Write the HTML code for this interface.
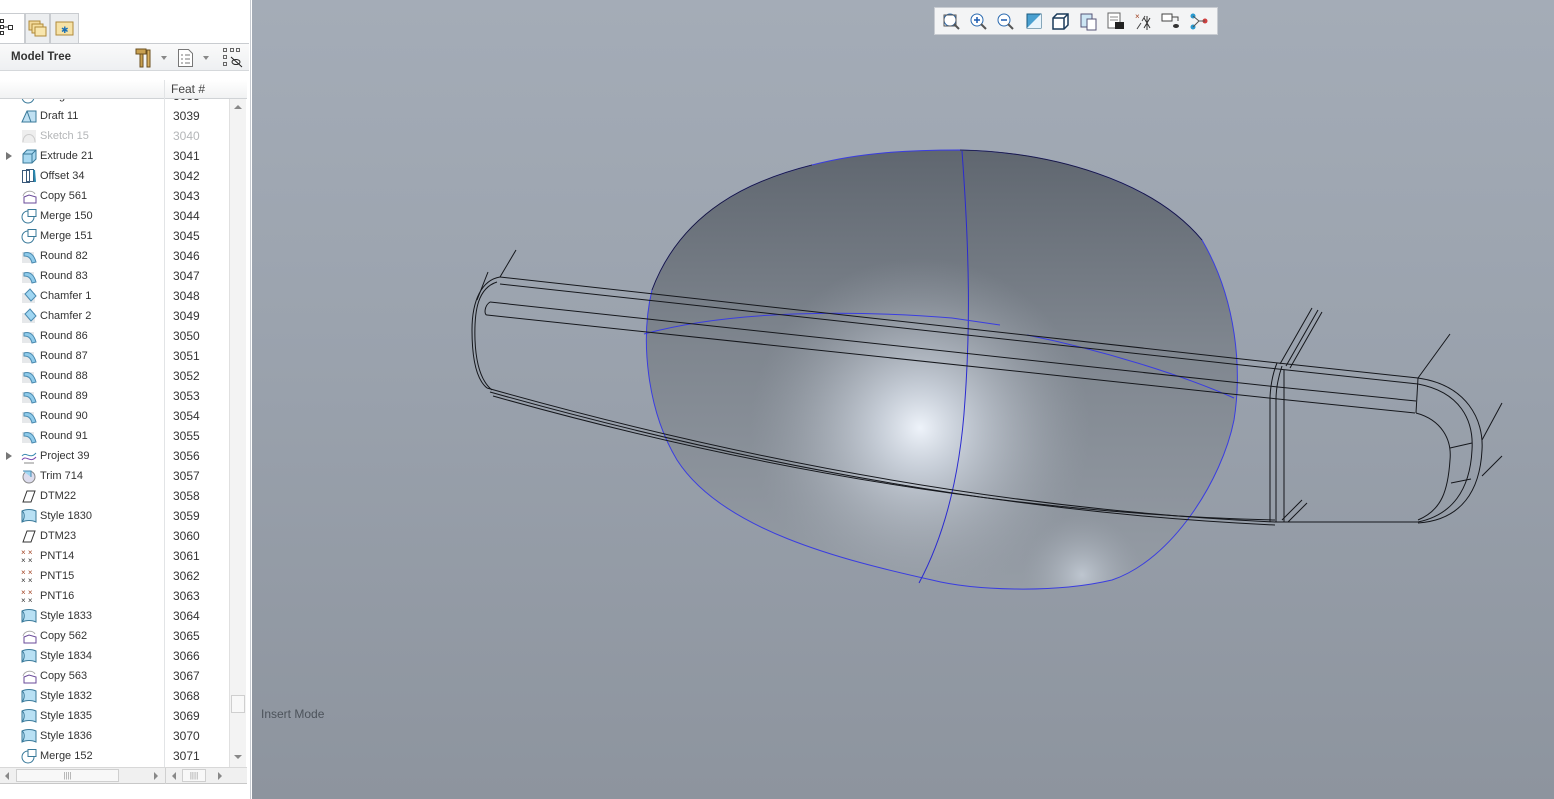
<!DOCTYPE html>
<html><head><meta charset="utf-8">
<style>
*{margin:0;padding:0;box-sizing:border-box}
body{width:1554px;height:799px;overflow:hidden;font-family:"Liberation Sans",Arial,sans-serif;background:#fff;position:relative}
#left{position:absolute;left:0;top:0;width:251px;height:799px;background:#fff;border-right:1px solid #c8ccd2}
.tabs{position:absolute;top:13px;left:0;height:30px;width:81px}
.tab{position:absolute;top:0;height:30px;border:1px solid #c9ccd0;border-bottom:none;background:#eceef0}
#mtbar{position:absolute;top:43px;left:0;width:249px;height:28px;border-top:1px solid #c9ccd0;border-bottom:1px solid #d5d8db;background:linear-gradient(#fafafa,#eef0f2)}
#mtbar .t{position:absolute;left:11px;top:7px;font-size:11.5px;font-weight:bold;color:#333}
#hdr{position:absolute;top:80px;left:0;width:247px;height:19px;border-bottom:1px solid #d0d3d6;background:linear-gradient(#fff,#f1f2f3)}
#hdr span{position:absolute;left:171px;top:2px;font-size:12px;color:#444}
#rows{position:absolute;left:0;top:99px;width:229px;height:668px;overflow:hidden}
.row{position:absolute;left:0;width:228px;height:20px;font-size:11px;color:#333}
.row .n{position:absolute;left:40px;top:4px}
.row .f{position:absolute;left:173px;top:3px;font-size:12px}
.row svg{position:absolute;left:21px;top:2px}
.row.g{color:#b4b6b8}
.arr{position:absolute;left:6px;top:6px;width:0;height:0;border-left:6px solid #777;border-top:4px solid transparent;border-bottom:4px solid transparent}
#vsb{position:absolute;left:229px;top:99px;width:17px;height:668px;background:#f3f3f3;border-left:1px solid #e0e0e0}
#coldiv{position:absolute;left:164px;top:80px;width:1px;height:687px;background:#e2e4e6;z-index:2}
#hsb{position:absolute;top:767px;left:0;width:247px;height:17px;background:#f0f0f0;border-top:1px solid #d8d8d8;border-bottom:1px solid #c8c8c8}
#view{position:absolute;left:252px;top:0;width:1302px;height:799px;background:linear-gradient(#a4acb7 0%,#9aa2ad 45%,#8d949e 100%)}
#tb{position:absolute;left:934px;top:7px;width:284px;height:28px;background:#f3f4f5;border:1px solid #c8ccd2}
#tb div{position:absolute;top:2px;width:24px;height:22px}
#im{position:absolute;left:9px;top:707px;font-size:12px;color:#4d535b}
</style></head><body>
<div id="left">
  <div class="tabs">
    <div class="tab" style="left:-2px;width:27px;background:#fff;border-bottom:1px solid #fff;height:31px"></div>
    <div class="tab" style="left:25px;width:25px"></div>
    <div class="tab" style="left:50px;width:29px"></div>
    <svg style="position:absolute;left:0;top:6px" width="14" height="18"><rect x="0.5" y="0.5" width="3" height="3" fill="#fff" stroke="#333"/><rect x="0.5" y="6.5" width="3" height="3" fill="#fff" stroke="#333"/><rect x="0.5" y="12.5" width="3" height="3" fill="#fff" stroke="#333"/><rect x="8.5" y="6.5" width="4" height="4" fill="#fff" stroke="#333"/><path d="M3 8h5" stroke="#333"/></svg>
    <svg style="position:absolute;left:27px;top:5px" width="20" height="20"><rect x="2" y="3" width="11" height="9" fill="#f2d99a" stroke="#b08a3a"/><rect x="5" y="6" width="11" height="9" fill="#f5df9f" stroke="#b08a3a"/><rect x="8" y="9" width="11" height="9" fill="#f8e6ae" stroke="#b08a3a"/></svg>
    <svg style="position:absolute;left:55px;top:6px" width="20" height="18"><rect x="1" y="3" width="17" height="13" fill="#f6e2a6" stroke="#b08a3a"/><text x="6" y="14" font-size="9" fill="#1a6fb5">✱</text></svg>
  </div>
  <div id="mtbar"><span class="t">Model Tree</span>
    <svg style="position:absolute;left:134px;top:3px" width="20" height="22"><rect x="2" y="2" width="10" height="5" fill="#c8a050" stroke="#6b5020"/><rect x="6" y="7" width="3" height="13" fill="#c8a050" stroke="#6b5020"/><rect x="13" y="3" width="3" height="17" fill="#d8b060" stroke="#6b5020"/></svg>
    <div style="position:absolute;left:161px;top:12px;border-top:4px solid #888;border-left:3px solid transparent;border-right:3px solid transparent"></div>
    <svg style="position:absolute;left:177px;top:4px" width="18" height="20"><path d="M1.5 1.5h10l4 4v13h-14z" fill="#fff" stroke="#777"/><path d="M4 7h2M8 7h5M4 11h2M8 11h5M4 15h2M8 15h5" stroke="#777"/></svg>
    <div style="position:absolute;left:203px;top:12px;border-top:4px solid #888;border-left:3px solid transparent;border-right:3px solid transparent"></div>
    <svg style="position:absolute;left:222px;top:3px" width="22" height="22"><rect x="1.5" y="1.5" width="3" height="3" fill="none" stroke="#666"/><rect x="1.5" y="8.5" width="3" height="3" fill="none" stroke="#666"/><rect x="1.5" y="15.5" width="3" height="3" fill="none" stroke="#666"/><rect x="8.5" y="1.5" width="3" height="3" fill="none" stroke="#666"/><rect x="14.5" y="1.5" width="3" height="3" fill="none" stroke="#666"/><ellipse cx="14" cy="15" rx="4" ry="2.5" fill="none" stroke="#222"/><path d="M9 10l11 10" stroke="#222"/></svg>
  </div>
  <div id="hdr"><span>Feat #</span></div>
  <div id="rows"></div>
  <div id="coldiv"></div>
  <div id="vsb">
    <div style="position:absolute;left:4px;top:6px;border-bottom:4px solid #888;border-left:4px solid transparent;border-right:4px solid transparent"></div>
    <div style="position:absolute;left:1px;top:596px;width:14px;height:18px;background:#f8f8f8;border:1px solid #cfcfcf"></div>
    <div style="position:absolute;left:4px;top:656px;border-top:4px solid #888;border-left:4px solid transparent;border-right:4px solid transparent"></div>
  </div>
  <div id="hsb">
    <div style="position:absolute;left:5px;top:4px;border-right:4px solid #888;border-top:4px solid transparent;border-bottom:4px solid transparent"></div>
    <div style="position:absolute;left:16px;top:1px;width:103px;height:13px;background:#f8f8f8;border:1px solid #cfcfcf;font-size:8px;color:#999;text-align:center;line-height:11px">||||</div>
    <div style="position:absolute;left:154px;top:4px;border-left:4px solid #888;border-top:4px solid transparent;border-bottom:4px solid transparent"></div>
    <div style="position:absolute;left:165px;top:0;width:1px;height:16px;background:#d0d0d0"></div>
    <div style="position:absolute;left:172px;top:4px;border-right:4px solid #888;border-top:4px solid transparent;border-bottom:4px solid transparent"></div>
    <div style="position:absolute;left:182px;top:1px;width:24px;height:13px;background:#f8f8f8;border:1px solid #cfcfcf;font-size:8px;color:#999;text-align:center;line-height:11px">||||</div>
    <div style="position:absolute;left:218px;top:4px;border-left:4px solid #888;border-top:4px solid transparent;border-bottom:4px solid transparent"></div>
  </div>
</div>
<div id="view">
<svg width="1302" height="799" style="position:absolute;left:0;top:0">
<defs>
<linearGradient id="bg1" x1="0" y1="0" x2="0" y2="1"><stop offset="0" stop-color="#5e656e"/><stop offset="0.45" stop-color="#7f868f"/><stop offset="1" stop-color="#979ea7"/></linearGradient>
<radialGradient id="hl" cx="668" cy="428" r="170" gradientUnits="userSpaceOnUse"><stop offset="0" stop-color="#eef3fa" stop-opacity="1"/><stop offset="0.25" stop-color="#d5dce6" stop-opacity="0.8"/><stop offset="1" stop-color="#a0a7b0" stop-opacity="0"/></radialGradient>
<radialGradient id="hl2" cx="830" cy="575" r="60" gradientUnits="userSpaceOnUse"><stop offset="0" stop-color="#c8d0da" stop-opacity="0.8"/><stop offset="1" stop-color="#a0a7b0" stop-opacity="0"/></radialGradient>
<clipPath id="bc"><path id="blobp" d="M708,150 C800,152 900,180 950,240 C985,300 990,370 982,420 C970,480 920,560 860,580 C800,594 720,590 680,580 C590,560 470,530 425,460 C395,410 388,340 400,290 C430,210 500,180 560,165 C610,152 660,150 708,150 Z"/></clipPath>
</defs>
<g clip-path="url(#bc)"><rect x="380" y="140" width="620" height="460" fill="url(#bg1)"/><rect x="380" y="140" width="620" height="460" fill="url(#hl)"/><rect x="380" y="140" width="620" height="460" fill="url(#hl2)"/></g>
<use href="#blobp" fill="none" stroke="#3a3de0" stroke-width="1"/>
<path d="M708,150 C800,152 900,180 950,240" fill="none" stroke="#1a1a30" stroke-width="0.8"/>
<path d="M400,290 C430,210 500,180 560,165" fill="none" stroke="#1a1a30" stroke-width="0.8"/>
<path d="M710,151 C718,260 718,330 713,400 C708,480 690,540 667,583" fill="none" stroke="#2a2ad0" stroke-width="1"/>
<path d="M392,334 C480,310 600,310 700,318 L748,325" fill="none" stroke="#3a3de0" stroke-width="1"/>
<path d="M775,335 C850,350 930,375 982,398" fill="none" stroke="#3a3de0" stroke-width="1"/>
<g fill="none" stroke="#15171c" stroke-width="1">
<path d="M248,277 L1026,363 L1166,378"/>
<path d="M248,284 L1026,369 L1166,384"/>
<path d="M238,302 L1026,387 L1164,401"/>
<path d="M235,315 L1026,399 L1163,413"/>
<path d="M248,277 C230,280 220,300 220,330 C220,360 225,380 235,388"/>
<path d="M245,282 C226,288 222,310 223,340 C224,365 230,382 240,390"/>
<path d="M238,302 C232,306 232,315 235,315"/>
<path d="M235,388 Q650,505 1023,522 L1166,522"/>
<path d="M238,392 Q650,508 1023,525"/>
<path d="M241,396 Q650,511 1023,520"/>
<path d="M1166,378 C1215,385 1232,420 1230,450 C1228,490 1210,520 1166,523"/>
<path d="M1166,384 C1208,392 1222,420 1220,450 C1218,490 1200,515 1166,522"/>
<path d="M1164,413 C1190,420 1200,440 1198,460 C1196,490 1190,510 1166,520"/>
<path d="M1198,448 L1220,443 M1199,483 L1219,479"/>
<path d="M1166,378 L1164,413"/>
<path d="M1025,363 C1020,375 1018,390 1018,400 L1018,522 M1030,366 C1026,378 1024,390 1024,400 L1024,522 M1032,370 L1032,522"/>
<path d="M1028,364 L1060,308 M1034,366 L1066,310 M1038,368 L1070,312"/>
<path d="M1166,378 L1198,334 M1230,440 L1250,403 M1230,476 L1250,456"/>
<path d="M248,277 L264,250 M225,300 L236,272"/>
<path d="M1030,520 L1050,500 M1036,522 L1055,503"/>
</g>
</svg>
<div id="im">Insert Mode</div>
</div>
<div id="tb"></div>
<script>
var items=[["Merge 149","3038","m"],["Draft 11","3039","d"],["Sketch 15","3040","s"],["Extrude 21","3041","e"],["Offset 34","3042","o"],["Copy 561","3043","c"],["Merge 150","3044","m"],["Merge 151","3045","m"],["Round 82","3046","r"],["Round 83","3047","r"],["Chamfer 1","3048","h"],["Chamfer 2","3049","h"],["Round 86","3050","r"],["Round 87","3051","r"],["Round 88","3052","r"],["Round 89","3053","r"],["Round 90","3054","r"],["Round 91","3055","r"],["Project 39","3056","p"],["Trim 714","3057","t"],["DTM22","3058","dt"],["Style 1830","3059","st"],["DTM23","3060","dt"],["PNT14","3061","pn"],["PNT15","3062","pn"],["PNT16","3063","pn"],["Style 1833","3064","st"],["Copy 562","3065","c"],["Style 1834","3066","st"],["Copy 563","3067","c"],["Style 1832","3068","st"],["Style 1835","3069","st"],["Style 1836","3070","st"],["Merge 152","3071","m"]];
var ic={
m:'<circle cx="7" cy="9" r="6" fill="none" stroke="#3a7a9a"/><rect x="7" y="1.5" width="8" height="7" fill="#fff" stroke="#3a7a9a"/>',
d:'<path d="M1 14 L6 3 L15 3 L15 14Z" fill="#bfe0f2" stroke="#3a7a9a"/><path d="M6 3 L10 14" stroke="#3a7a9a"/>',
s:'<rect x="1" y="2" width="14" height="13" fill="#eee"/><path d="M2 14 C2 4 14 4 14 14" fill="none" stroke="#ccc"/>',
e:'<path d="M2 6 L6 2 L15 2 L15 11 L11 15 L2 15Z" fill="#a8d8f0" stroke="#3a7a9a"/><path d="M2 6 L11 6 L15 2 M11 6 L11 15" fill="none" stroke="#3a7a9a"/>',
o:'<rect x="1.5" y="2.5" width="7" height="12" fill="#fff" stroke="#3a5a7a"/><rect x="5.5" y="1.5" width="7" height="12" fill="none" stroke="#3a5a7a"/><path d="M13 2 L14 14" stroke="#2a8ab0" stroke-width="2"/>',
c:'<path d="M2 8 C4 2 12 2 14 6" fill="none" stroke="#aaa"/><path d="M3 9 L8 7 L15 9 L15 15 L3 15Z" fill="#fff" stroke="#6a4a9a"/>',
r:'<rect x="1" y="4" width="12" height="11" fill="#e6e8ea"/><path d="M3 5 C9 3 13 7 15 14 L11 15 C10 10 7 8 3 8Z" fill="#8fcbea" stroke="#4a8ab0"/>',
h:'<rect x="1" y="5" width="13" height="10" fill="#e6e8ea"/><path d="M4 6 L9 1 L15 8 L10 13Z" fill="#9fd6f2" stroke="#4a8ab0"/>',
p:'<path d="M1 12 C5 6 9 16 15 9" fill="none" stroke="#7a4ab0"/><path d="M1 8 C5 3 9 12 15 5" fill="none" stroke="#3a8ab0"/><path d="M3 15 L13 15" stroke="#888"/>',
t:'<circle cx="8" cy="9" r="6" fill="#dde" stroke="#888"/><path d="M2 3 L10 3 L10 9" fill="#9fd6f2" stroke="#4a8ab0"/>',
dt:'<path d="M2 14 L6 3 L14 3 L10 14Z" fill="none" stroke="#333"/>',
st:'<path d="M1 3 C5 1 11 1 15 3 L15 14 C11 12 5 12 1 14Z" fill="#b8e0f4" stroke="#3a7a9a"/><path d="M1 3 C4 5 4 10 1 14" fill="none" stroke="#3a7a9a"/>',
pn:'<text x="0" y="7" font-size="8" fill="#a04020">× ×</text><text x="0" y="15" font-size="8" fill="#333">× ×</text>'
};
var h='';
for(var i=0;i<items.length;i++){var it=items[i];var ty=-13+i*20;
h+='<div class="row'+(it[2]=='s'?' g':'')+'" style="top:'+ty+'px">'+((it[0]=='Extrude 21'||it[0]=='Project 39')?'<div class="arr"></div>':'')+'<svg width="16" height="16">'+ic[it[2]]+'</svg><span class="n">'+it[0]+'</span><span class="f">'+it[1]+'</span></div>';}
document.getElementById('rows').innerHTML=h;
var tb=['<circle cx="11" cy="10" r="6" fill="#fff" stroke="#2a6ab0"/><rect x="5" y="5" width="12" height="11" fill="none" stroke="#555"/><path d="M15 14l5 5" stroke="#555" stroke-width="2"/>',
'<circle cx="10" cy="10" r="6" fill="#fff" stroke="#2a6ab0"/><path d="M7 10h6M10 7v6" stroke="#1a5ab0" stroke-width="1.5"/><path d="M14 14l5 5" stroke="#555" stroke-width="2"/>',
'<circle cx="10" cy="10" r="6" fill="#fff" stroke="#2a6ab0"/><path d="M7 10h6" stroke="#1a5ab0" stroke-width="1.5"/><path d="M14 14l5 5" stroke="#555" stroke-width="2"/>',
'<rect x="5" y="4" width="14" height="14" fill="#4aa0d0" stroke="#1a5a80"/><path d="M5 18 L19 4 L19 18Z" fill="#e8f4fc"/>',
'<path d="M4 8 L8 4 L19 4 L19 15 L15 19 L4 19Z" fill="#fff" stroke="#1a3a5a" stroke-width="1.5"/><path d="M4 8 L15 8 L19 4 M15 8 L15 19" fill="none" stroke="#1a3a5a" stroke-width="1.5"/>',
'<rect x="4" y="4" width="11" height="13" fill="#cde6f4" stroke="#557"/><rect x="10" y="9" width="9" height="11" fill="#fff" stroke="#557"/>',
'<rect x="4" y="3" width="12" height="15" fill="#fff" stroke="#666"/><path d="M6 7h8M6 10h8" stroke="#888"/><rect x="11" y="12" width="9" height="7" fill="#222"/>',
'<path d="M5 19 L9 13 M10 11 L13 6" stroke="#444"/><path d="M12 8 L18 18 M18 8 L12 18 M15 6 L15 20" stroke="#333"/><text x="3" y="9" font-size="8" fill="#a04020">×</text>',
'<rect x="3" y="4" width="10" height="7" fill="#fff" stroke="#444"/><path d="M13 7h6v4" stroke="#444" fill="none"/><ellipse cx="17" cy="16" rx="3" ry="2" fill="#333"/>',
'<circle cx="6" cy="6" r="2.5" fill="#2a9ad0"/><circle cx="6" cy="17" r="2.5" fill="#2a9ad0"/><circle cx="18" cy="11" r="2.5" fill="#d04040"/><path d="M6 6 L12 11 L18 11 M12 11 L6 17" stroke="#555" fill="none"/>'];
var th='';for(var j=0;j<tb.length;j++){th+='<div style="left:'+(4+j*27.5)+'px"><svg width="24" height="22">'+tb[j]+'</svg></div>';}
document.getElementById('tb').innerHTML=th;
</script>
</body></html>
